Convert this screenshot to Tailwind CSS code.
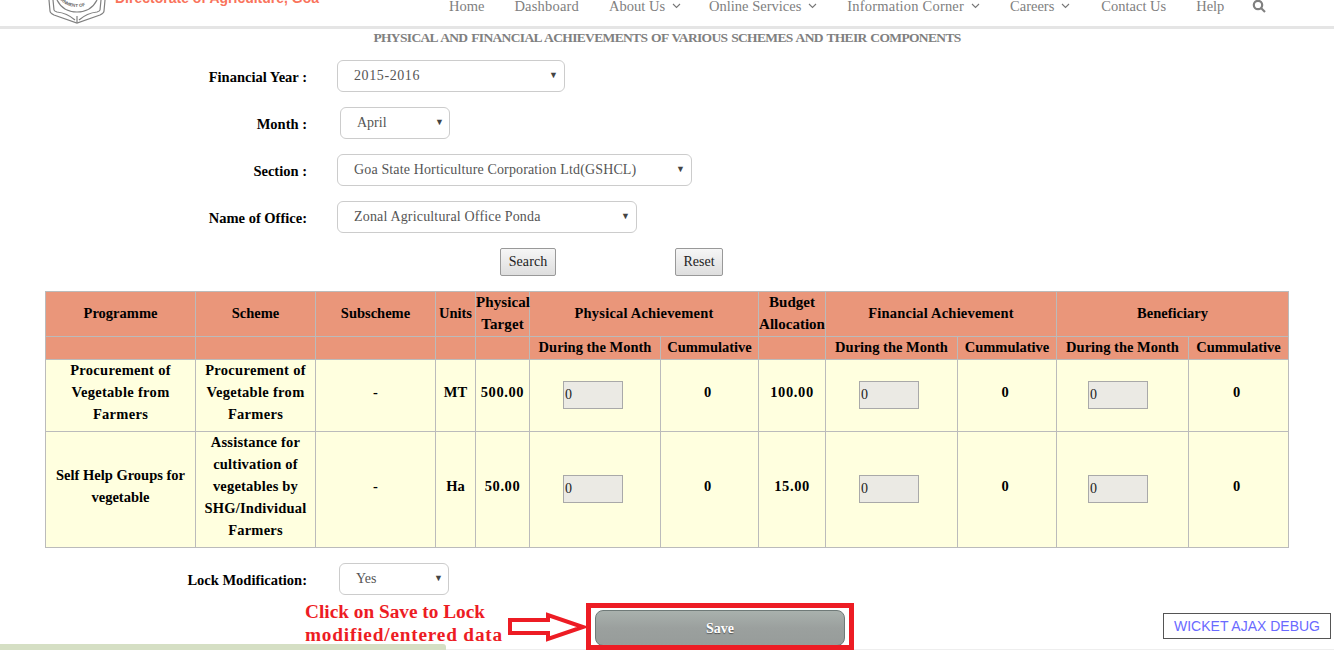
<!DOCTYPE html>
<html lang="en">
<head>
    <meta charset="UTF-8">
    <title>Physical and Financial Achievements</title>
    <script src="https://cdn.jsdelivr.net/npm/@tailwindcss/browser@4"></script>
</head>
<body class="w-[1334px] h-[650px] overflow-hidden bg-white relative font-['Liberation_Serif',serif] text-[14.5px]">

    <!-- header, cut off at the top of the window -->
    <header class="h-[29px] border-b-[3px] border-[#e5e5e5] flex overflow-hidden">
        <div class="w-[48px] shrink-0"></div>
        <svg class="shrink-0" width="60" height="24" viewBox="0 0 60 24" fill="none" stroke="#808080" stroke-width="1.2">
            <path d="M1 0L2 11Q2 13 6 15L29 23L52 15Q56 13 56 11L57 0"/>
            <path d="M5 0L6 10Q6 11 9 12Q19 13 27 20M53 0L52 10Q52 11 49 12Q39 13 31 20"/>
            <path d="M29 16V23"/>
            <path d="M9 0Q15 12 29 12Q43 12 49 0"/>
            <path id="crest-arc" d="M10 -3Q17 7 29 7Q41 7 48 -3" stroke="none"/>
            <text font-size="4.5" font-weight="700" fill="#666" stroke="none" font-family="Liberation Sans"><textPath href="#crest-arc" startOffset="4">RNMENT OF</textPath></text>
        </svg>
        <div class="ml-[7px] -mt-[10px] text-[#f9735b] font-['Liberation_Sans',sans-serif] font-bold text-[14px] leading-[17px] whitespace-nowrap">Directorate of Agriculture, Goa</div>
        <nav class="absolute left-[449px] top-[-4px] flex items-center gap-[30px] text-[#808080] text-[14.5px] leading-[20px] whitespace-nowrap">
            <a>Home</a>
            <a class="tracking-[0.2px]">Dashboard</a>
            <a class="flex items-center gap-[7px]">About Us <svg width="9" height="6" viewBox="0 0 9 6" fill="none" stroke="#777" stroke-width="1.1"><path d="M1 1l3.5 3.5L8 1"/></svg></a>
            <a class="-ml-[2px] flex items-center gap-[7px]">Online Services <svg width="9" height="6" viewBox="0 0 9 6" fill="none" stroke="#777" stroke-width="1.1"><path d="M1 1l3.5 3.5L8 1"/></svg></a>
            <a class="flex items-center gap-[7px] tracking-[0.2px]">Information Corner <svg width="9" height="6" viewBox="0 0 9 6" fill="none" stroke="#777" stroke-width="1.1"><path d="M1 1l3.5 3.5L8 1"/></svg></a>
            <a class="flex items-center gap-[7px]">Careers <svg width="9" height="6" viewBox="0 0 9 6" fill="none" stroke="#777" stroke-width="1.1"><path d="M1 1l3.5 3.5L8 1"/></svg></a>
            <a class="ml-[1px]">Contact Us</a>
            <a>Help</a>
            <svg class="-ml-[2px]" width="14" height="14" viewBox="0 0 14 14" fill="none" stroke="#808080" stroke-width="2.2"><circle cx="6" cy="6" r="4.2"/><path d="M9 9l4 4"/></svg>
        </nav>
    </header>

    <h1 class="h-[19px] text-center text-[#808080] font-bold text-[13.5px] tracking-[-0.65px] [word-spacing:1px] leading-[18px] whitespace-nowrap">PHYSICAL AND FINANCIAL ACHIEVEMENTS OF VARIOUS SCHEMES AND THEIR COMPONENTS</h1>

    <form class="mt-[12px] flex flex-col gap-[15px] text-black font-bold">
        <div class="flex items-center h-[32px]">
            <label class="w-[307px] text-right pt-[4px]">Financial Year :</label>
            <div class="ml-[30px] w-[228px] h-[32px] border border-[#ccc] rounded-[6px] flex items-center justify-between pl-[16px] pr-[6px] font-normal text-[#555] text-[14px]"><span class="-mt-[2px] tracking-[0.6px]">2015-2016</span><span class="text-[9px] text-[#444]">▼</span></div>
        </div>
        <div class="flex items-center h-[32px]">
            <label class="w-[307px] text-right pt-[4px]">Month :</label>
            <div class="ml-[33px] w-[110px] h-[32px] border border-[#ccc] rounded-[6px] flex items-center justify-between pl-[16px] pr-[5px] font-normal text-[#555] text-[14px]"><span class="-mt-[2px]">April</span><span class="text-[9px] text-[#444]">▼</span></div>
        </div>
        <div class="flex items-center h-[32px]">
            <label class="w-[307px] text-right pt-[4px]">Section :</label>
            <div class="ml-[30px] w-[355px] h-[32px] border border-[#ccc] rounded-[6px] flex items-center justify-between pl-[16px] pr-[6px] font-normal text-[#555] text-[14px]"><span class="-mt-[2px] tracking-[0.14px]">Goa State Horticulture Corporation Ltd(GSHCL)</span><span class="text-[9px] text-[#444]">▼</span></div>
        </div>
        <div class="flex items-center h-[32px]">
            <label class="w-[307px] text-right pt-[4px]">Name of Office:</label>
            <div class="ml-[30px] w-[300px] h-[32px] border border-[#ccc] rounded-[6px] flex items-center justify-between pl-[16px] pr-[6px] font-normal text-[#555] text-[14px]"><span class="-mt-[2px] tracking-[0.17px]">Zonal Agricultural Office Ponda</span><span class="text-[9px] text-[#444]">▼</span></div>
        </div>
        <div class="flex h-[28px]">
            <button type="button" class="ml-[500px] w-[56px] h-[28px] pb-[2px] border border-[#999] rounded-[2px] bg-gradient-to-b from-[#f6f6f6] to-[#dedede] text-[#222] font-normal text-[14px] tracking-[0.1px]">Search</button>
            <button type="button" class="ml-[119px] w-[48px] h-[28px] pb-[2px] border border-[#999] rounded-[2px] bg-gradient-to-b from-[#f6f6f6] to-[#dedede] text-[#222] font-normal text-[14px]">Reset</button>
        </div>
    </form>

    <table class="ml-[45px] mt-[15px] w-[1243px] table-fixed border-collapse text-black font-bold text-center text-[14.5px] leading-[22px] [&_td]:border [&_td]:border-[#bbb] [&_td]:-translate-y-px [&_th]:border [&_th]:border-[#bbb] [&_th]:pb-[1px]">
        <colgroup>
            <col class="w-[150px]"><col class="w-[120px]"><col class="w-[120px]"><col class="w-[40px]"><col class="w-[54px]"><col class="w-[131px]"><col class="w-[98px]"><col class="w-[67px]"><col class="w-[132px]"><col class="w-[99px]"><col class="w-[132px]"><col class="w-[100px]">
        </colgroup>
        <thead class="bg-[#ea967a]">
            <tr class="h-[45px] leading-[21.5px]">
                <th>Programme</th><th>Scheme</th><th>Subscheme</th><th>Units</th><th class="text-[15px] tracking-[0.1px]">Physical Target</th>
                <th colspan="2" class="tracking-[0.2px]">Physical Achievement</th><th class="text-[15px]">Budget Allocation</th>
                <th colspan="2" class="tracking-[0.2px]">Financial Achievement</th><th colspan="2">Beneficiary</th>
            </tr>
            <tr class="h-[23px] leading-[21px]">
                <th></th><th></th><th></th><th></th><th></th>
                <th>During the Month</th><th>Cummulative</th><th></th>
                <th>During the Month</th><th>Cummulative</th><th>During the Month</th><th>Cummulative</th>
            </tr>
        </thead>
        <tbody class="bg-[#ffffdf]">
            <tr>
                <td class="pb-[5px] tracking-[0.3px]">Procurement of Vegetable from Farmers</td><td class="pb-[5px] tracking-[0.3px]">Procurement of Vegetable from Farmers</td><td class="pb-[5px]">-</td><td class="pb-[5px]">MT</td><td class="pb-[5px] tracking-[0.6px]">500.00</td>
                <td><input value="0" class="block ml-[33px] w-[60px] h-[28px] border border-[#a9a9a9] bg-[#ebeae4] px-[1px] text-[14px] text-[#222] font-normal"></td><td class="pb-[5px] pr-[4px]">0</td><td class="pb-[5px] tracking-[0.6px]">100.00</td>
                <td><input value="0" class="block ml-[33px] w-[60px] h-[28px] border border-[#a9a9a9] bg-[#ebeae4] px-[1px] text-[14px] text-[#222] font-normal"></td><td class="pb-[5px] pr-[4px]">0</td>
                <td><input value="0" class="block ml-[31px] w-[60px] h-[28px] border border-[#a9a9a9] bg-[#ebeae4] px-[1px] text-[14px] text-[#222] font-normal"></td><td class="pb-[5px] pr-[4px]">0</td>
            </tr>
            <tr>
                <td class="pb-[5px]">Self Help Groups for vegetable</td><td class="pb-[5px] tracking-[0.2px]">Assistance for cultivation of vegetables by SHG/Individual Farmers</td><td class="pb-[5px]">-</td><td class="pb-[5px]">Ha</td><td class="pb-[5px] tracking-[0.6px]">50.00</td>
                <td><input value="0" class="block ml-[33px] w-[60px] h-[28px] border border-[#a9a9a9] bg-[#ebeae4] px-[1px] text-[14px] text-[#222] font-normal"></td><td class="pb-[5px] pr-[4px]">0</td><td class="pb-[5px] tracking-[0.6px]">15.00</td>
                <td><input value="0" class="block ml-[33px] w-[60px] h-[28px] border border-[#a9a9a9] bg-[#ebeae4] px-[1px] text-[14px] text-[#222] font-normal"></td><td class="pb-[5px] pr-[4px]">0</td>
                <td><input value="0" class="block ml-[31px] w-[60px] h-[28px] border border-[#a9a9a9] bg-[#ebeae4] px-[1px] text-[14px] text-[#222] font-normal"></td><td class="pb-[5px] pr-[4px]">0</td>
            </tr>
        </tbody>
    </table>

    <div class="mt-[15px] flex items-center h-[32px] font-bold text-black">
        <label class="w-[307px] text-right pt-[4px]">Lock Modification:</label>
        <div class="ml-[32px] w-[110px] h-[32px] border border-[#ccc] rounded-[6px] flex items-center justify-between pl-[16px] pr-[5px] font-normal text-[#555] text-[14px]"><span class="-mt-[2px]">Yes</span><span class="text-[9px] text-[#444]">▼</span></div>
    </div>

    <!-- footer strip -->
    <div class="absolute left-0 bottom-0 w-[446px] h-[6px] bg-[#d5dfc4] rounded-tr-[3px]"></div>
    <div class="absolute left-[446px] right-0 bottom-0 h-[1px] bg-[#eee]"></div>

    <button type="button" class="absolute left-[595px] top-[610px] w-[250px] h-[36px] rounded-[8px] border border-[#6f7a78] bg-gradient-to-b from-[#a9b1ad] via-[#9ba09e] to-[#979c9a] text-white font-bold text-[14px] [text-shadow:0_1px_1px_#555]">Save</button>

    <!-- annotation drawn over the screenshot -->
    <div class="absolute left-[586px] top-[603px] w-[268px] h-[47px] border-[5px] border-[#ed1c24]"></div>
    <div class="absolute left-[305px] top-[600px] text-[#ed1c24] font-bold text-[19.3px] leading-[23px] whitespace-nowrap">Click on Save to Lock<br><span class="tracking-[0.8px]">modified/entered data</span></div>
    <svg class="absolute left-[507px] top-[612px]" width="80" height="30" viewBox="0 0 80 30" fill="#fff" stroke="#ed1c24" stroke-width="4">
        <path d="M3 8H41V3L76 15L41 27V21H3Z"/>
    </svg>

    <div class="absolute left-[1163px] top-[613px] w-[168px] h-[26px] border border-[#555] bg-white text-[#6a6aff] font-['Liberation_Sans',sans-serif] text-[14px] leading-[24px] text-center">WICKET AJAX DEBUG</div>

</body>
</html>
